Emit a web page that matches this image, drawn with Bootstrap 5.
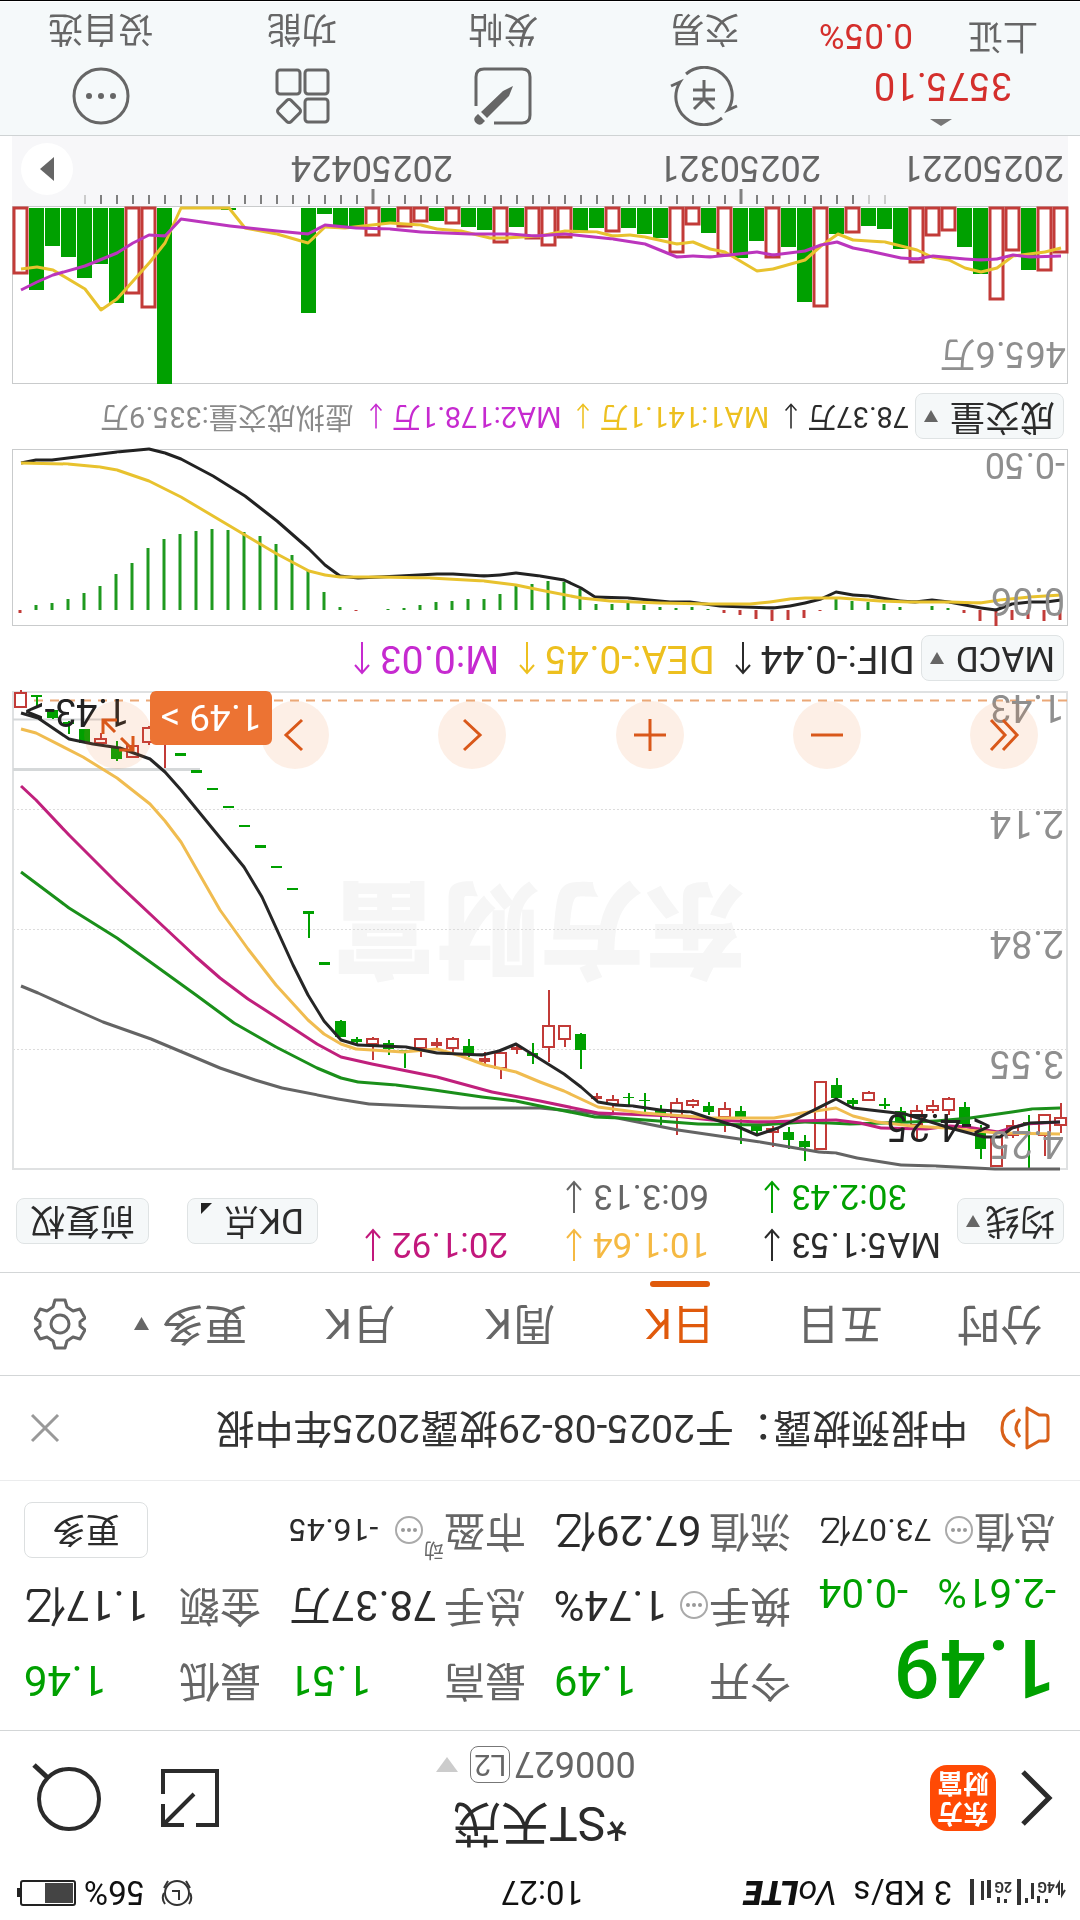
<!DOCTYPE html>
<html lang="zh-CN">
<head>
<meta charset="utf-8">
<meta name="viewport" content="width=device-width, initial-scale=1">
<title>*ST天茂 000627</title>
<link href="https://cdn.jsdelivr.net/npm/bootstrap@5.3.0/dist/css/bootstrap.min.css" rel="stylesheet">
<style>
body{font-family:Roboto,"Noto Sans CJK SC",sans-serif;color:#2b2b2b;background:#fff;line-height:1}
button{font-family:inherit;line-height:1}
a{color:inherit;text-decoration:none}
svg{display:block;flex:none}
/* the phone is held upside down */
.phone{transform:rotate(180deg);min-height:100vh;border-bottom:1px solid #000}
.line{fill:none;stroke:currentColor;stroke-width:3}
.thin{stroke-width:2}.thick{stroke-width:4}.heavy{stroke-width:5}
.status{height:54px;padding:0 16px 0 12px;font-size:33px;color:#111}
.grow{flex:1 1 0}
.volte{font-style:italic;font-size:34px}
.volte b{font-weight:900}
.sig{font-size:14px}
.head{height:136px;border-bottom:1px solid #d3d6d7;padding:0 30px}
.back{margin-left:-4px}
.logo{width:66px;height:66px;border-radius:17px;background:#ff4a05;color:#fff;font-size:26px;font-weight:700;line-height:30px}
.stock{font-size:48px;line-height:60px}
.code{font-size:36px;color:#666;padding-left:8px;margin:10px 0 2px}
.lv{font-size:29px;border:1px solid #777;border-radius:8px;padding:3px}
.plain{background:none;border:0;padding:0;color:inherit}
.acts{gap:56px}
.quote{height:250px;padding:12px 24px;display:grid;grid-template-columns:repeat(4,1fr);column-gap:28px;border-bottom:1px solid #ebeced}
.quote .col-q{display:flex;flex-direction:column}
.cell{height:75px;font-size:42px;display:flex;align-items:center;white-space:nowrap}
.cell span{color:#666;font-size:41px}
.cell b{margin-left:auto;font-weight:400}
.cell .small-v{font-size:32px}
.cell .tiny{font-size:20px;align-self:flex-start;padding-top:8px}
.down{color:#00a000}
.up{color:#d42f2c}
.price{height:106px;font-size:82px;font-weight:500;padding-top:9px}
.chg{height:44px;font-size:40px;padding-bottom:4px}
.more{width:124px;height:56px;border:1px solid #dcdfe0;border-radius:8px;background:#fff;font-size:34px;color:#2b2b2b}
.notice{height:105px;border-bottom:1px solid #d3d6d7;padding:0 30px;font-size:39px;gap:32px;color:#333}
.tabs{height:103px;border-bottom:1px solid #d3d6d7;font-size:43px;color:#666}
.tabs .tab{width:160px;height:100%;position:relative}
.tabs .active{color:#e05a0c}
.tabs .active::after{content:"";position:absolute;bottom:8px;width:60px;height:6px;border-radius:3px;background:#e05a0c}
.tabs .tab-more{display:flex;align-items:center;justify-content:center;gap:12px;padding-left:18px}
.pill{height:46px;border:1px solid #dfe3e4;border-radius:8px;background:#f5f8f9;color:#2b2b2b;font-size:35px;padding:0 8px;display:flex;align-items:center;justify-content:center;gap:12px;white-space:nowrap;flex:none}
.pill-tight{gap:5px}
.pill-wide{padding:0 13px}
.ma{height:102px;padding:0 16px;font-size:35px}
.ma .vals{flex:1;display:grid;grid-template-columns:176px 198px 201px;row-gap:13px;margin-left:18px}
.ma .vals div{display:flex;gap:10px;justify-content:flex-end;align-items:center}
.ma-btns{gap:38px}
.legend-row{height:65px;padding:0 16px;gap:6px}
.macd{font-size:39px}
.vol{font-size:29px}
.legend-row .v{display:flex;gap:9px;align-items:center;margin-right:13px;white-space:nowrap}
.legend-row.vol .v{margin-right:9px}
.c-y{color:#edc01f}.c-o{color:#f5b942}.c-m{color:#c2187c}.c-p{color:#c62ad0}.c-g{color:#00a000}.c-d{color:#666}.c-l{color:#8a8a8a}
.chart{margin:0 12px;position:relative}
svg.plot{width:100%;height:auto;overflow:visible}
.chart text{font-size:38px;fill:#8f8f8f}
.chart .scale-s{font-size:36px}
.chart .dark{fill:#222}
.chart .water{font-size:104px;font-weight:900;fill:#f6f6f6}
.tools{position:absolute;left:30px;right:72px;bottom:10px}
.tools button{width:68px;height:68px;border-radius:50%;border:0;padding:0;background:rgba(240,120,50,.12);color:#d9581a;display:flex;align-items:center;justify-content:center}
.pricetag{position:absolute;right:138px;bottom:0;width:122px;height:54px;border-radius:6px;background:#ec7333;color:#fff;font-size:37px;border:0;padding:0}
.axis{margin:0 12px;position:relative;background:#f7f7f9}
.axis text{font-size:36px;fill:#666}
.next{position:absolute;right:9px;top:11px;width:52px;height:52px;border-radius:50%;border:0;background:#fff;padding:0;display:flex;align-items:center;justify-content:center;color:#666}
.foot{height:134px;background:#f5f9fa;border-top:1px solid #cfd3d4;color:#666;font-size:35px}
.index{width:275px;padding:9px 0 0 42px}
.index .idx-mark{margin-left:86px}
.index .idx-val{font-size:38px;margin:14px 0 0 26px}
.index .idx-row{display:flex;gap:55px;margin-top:14px}
.foot a.item{flex:1;display:flex;flex-direction:column;align-items:center;gap:20px;padding-top:9px}
</style>
</head>
<body>
<svg width="0" height="0" class="position-absolute" aria-hidden="true"><defs>
<symbol id="dn" viewBox="0 0 18 34"><path class="line thin" d="M9 1v31M2 24l7 8 7-8"/></symbol>
<symbol id="upa" viewBox="0 0 18 34"><path class="line thin" d="M9 33V2M2 10l7-8 7 8"/></symbol>
<symbol id="tri" viewBox="0 0 14 12"><path fill="currentColor" d="M0 0h14L7 12z"/></symbol>
<symbol id="info" viewBox="0 0 30 30"><circle cx="15" cy="15" r="13" fill="none" stroke="#aaa" stroke-width="2"/><g fill="#999"><circle cx="9" cy="15" r="2"/><circle cx="15" cy="15" r="2"/><circle cx="21" cy="15" r="2"/></g></symbol>
</defs></svg>

<main class="phone">
<div class="status d-flex align-items-center">
  <div class="grow d-flex align-items-center gap-2">
    <svg class="me-1" width="104" height="30" viewBox="0 0 104 30" fill="#333"><path d="M3 18l3-5v12M9 13v12l3-5" stroke="#333" stroke-width="2" fill="none"/><text class="sig" x="13" y="26" font-weight="700">4G</text><path d="M20 5h3v4h-3zM28 5h3v7h-3zM34 9h3v16h-3zM40 5h3v5h-3M47 3h4v26h-4z"/><text class="sig" x="56" y="26" font-weight="700">2G</text><path d="M61 5h3v4h-3zM68 5h3v6h-3zM77 10h4v18h-4zM84 8h3v19h-3zM94 3h4v26h-4z"/></svg>
    <span class="text-nowrap me-2">3 KB/s</span><span class="volte">Vo<b>LTE</b></span>
  </div>
  <div>10:27</div>
  <div class="grow d-flex align-items-center justify-content-end gap-2">
    <svg class="me-2" width="32" height="30" viewBox="0 0 32 30" fill="none" stroke="#333" stroke-width="2"><circle cx="16" cy="15" r="12"/><path d="M14 8v9h7M4 4c-3 4-3 7-1 11M28 4c3 4 3 7 1 11M3 20l4 7M29 20l-4 7"/></svg>
    <span>56%</span>
    <svg width="60" height="28" viewBox="0 0 60 28"><rect x="1" y="2" width="54" height="24" rx="2" fill="none" stroke="#222" stroke-width="2"/><path fill="#444" d="M3 4h28v20H3z"/><path fill="#222" d="M56 10h3v9h-3z"/></svg>
  </div>
</div>

<header class="head d-flex align-items-center">
  <div class="grow d-flex align-items-center gap-4">
    <a href="#" class="back" aria-label="返回"><svg width="34" height="58" viewBox="0 0 34 58"><path class="line heavy" d="M31 3L5 29l26 26"/></svg></a>
    <a href="#" class="logo text-center d-flex flex-column justify-content-center"><span>东方</span><span>财富</span></a>
  </div>
  <div class="text-center">
    <h1 class="stock m-0 fw-normal">*ST天茂</h1>
    <div class="code d-flex align-items-center justify-content-center gap-1"><span>000627</span><span class="lv">L2</span>
    <svg class="ms-2" width="22" height="15" viewBox="0 0 22 15"><path fill="#ccc" d="M0 0h22L11 15z"/></svg></div>
  </div>
  <div class="grow acts d-flex align-items-center justify-content-end">
    <button class="plain" aria-label="全屏"><svg width="60" height="60" viewBox="0 0 60 60"><path class="line thick" d="M24 3H3v54h54V34M36 3h21v21M57 3L26 34"/></svg></button>
    <button class="plain" aria-label="搜索"><svg width="74" height="70" viewBox="0 0 74 70"><circle class="line thick" cx="35" cy="34" r="30"/><path class="line heavy" d="M56 55l14 13"/></svg></button>
  </div>
</header>

<section class="quote">
  <div class="col-q">
    <div class="price down">1.49</div>
    <div class="chg down d-flex justify-content-between align-items-center"><b class="fw-normal">-2.61%</b><b class="fw-normal">-0.04</b></div>
    <div class="cell"><span>总值</span><svg width="30" height="30"><use href="#info"/></svg><b class="small-v">73.07亿</b></div>
  </div>
  <div class="col-q">
    <div class="cell"><span>今开</span><b class="down">1.49</b></div>
    <div class="cell"><span>换手</span><svg width="30" height="30"><use href="#info"/></svg><b>1.74%</b></div>
    <div class="cell"><span>流值</span><b>67.29亿</b></div>
  </div>
  <div class="col-q">
    <div class="cell"><span>最高</span><b class="down">1.51</b></div>
    <div class="cell"><span>总手</span><b>78.37万</b></div>
    <div class="cell"><span>市盈</span><span class="tiny">动</span><svg width="30" height="30"><use href="#info"/></svg><b class="small-v">-16.45</b></div>
  </div>
  <div class="col-q">
    <div class="cell"><span>最低</span><b class="down">1.46</b></div>
    <div class="cell"><span>金额</span><b>1.17亿</b></div>
    <div class="cell justify-content-end"><button class="more">更多</button></div>
  </div>
</section>

<section class="notice d-flex align-items-center">
  <svg width="50" height="44" viewBox="0 0 50 44" color="#d9611a"><path class="line" stroke-linejoin="round" d="M2 12q0-3 3-3h6L23 2v40L11 35H5q-3 0-3-3zM30 13q8 9 0 18M35 4q13 5 13 18T35 40"/></svg>
  <a href="#" class="flex-grow-1 text-nowrap">中报预披露：于2025-08-29披露2025年中报</a>
  <button class="plain" aria-label="关闭"><svg width="30" height="30" viewBox="0 0 30 30" color="#999"><path class="line" d="M2 2l26 26M28 2L2 28"/></svg></button>
</section>

<nav class="tabs d-flex align-items-center">
  <button class="plain tab">分时</button>
  <button class="plain tab">五日</button>
  <button class="plain tab active d-flex justify-content-center align-items-center">日K</button>
  <button class="plain tab">周K</button>
  <button class="plain tab">月K</button>
  <button class="plain tab tab-more">更多<svg width="15" height="13"><use href="#tri"/></svg></button>
  <button class="plain flex-grow-1 d-flex justify-content-center" aria-label="设置"><svg width="52" height="52" viewBox="0 0 52 52"><path class="line" stroke-linejoin="round" d="M21 2h10l2 7 6 4 7-2 5 9-5 4v4l5 4-5 9-7-2-6 4-2 7H21l-2-7-6-4-7 2-5-9 5-4v-4l-5-4 5-9 7 2 6-4z"/><circle class="line" cx="26" cy="26" r="9"/></svg></button>
</nav>

<section class="ma d-flex align-items-center">
  <button class="pill pill-tight">均线<svg width="14" height="12" color="#666"><use href="#tri"/></svg></button>
  <div class="vals">
    <div>MA5:1.53<svg width="18" height="34"><use href="#dn"/></svg></div>
    <div class="c-o">10:1.64<svg width="18" height="34"><use href="#dn"/></svg></div>
    <div class="c-m">20:1.92<svg width="18" height="34"><use href="#dn"/></svg></div>
    <div class="c-g">30:2.43<svg width="18" height="34"><use href="#dn"/></svg></div>
    <div class="c-d">60:3.13<svg width="18" height="34"><use href="#dn"/></svg></div>
  </div>
  <div class="ma-btns d-flex">
    <button class="pill pill-wide"><span>DK点</span><svg class="mt-4" width="11" height="11" viewBox="0 0 12 12"><path d="M12 0v12H0z" fill="#222"/></svg></button>
    <button class="pill pill-wide">前复权</button>
  </div>
</section>

<section class="chart">
  <svg class="plot" viewBox="0 0 1056 479" id="kline">
    <text class="water" x="320" y="279">东方财富</text>
    <path d="M1 120.500h1054M1 240.500h1054M1 360.500h1054" stroke="#dcdcdc" stroke-dasharray="2 2"/>
    <rect x="1" y="1" width="1054" height="477" fill="none" stroke="#dfe1e2" stroke-width="2"/>
    <path d="M1 469.500h1054" stroke="#eba877" stroke-width="2" stroke-dasharray="9 7"/>
    <path d="M950 450.500h105" stroke="#d5d8d9" stroke-width="2"/><path d="M868 400.500h187" stroke="#d5d8d9" stroke-width="3"/>
    <g id="candles" transform="rotate(180) translate(-1068 -1170)"></g>
    <text x="4" y="39">4.25</text><text x="4" y="119">3.55</text><text x="4" y="239">2.84</text><text x="4" y="359">2.14</text><text x="4" y="475">1.43</text>
    <text class="dark" x="77" y="56">&lt;-4.25</text><text class="dark" x="939" y="471">1.43-&gt;</text>
  </svg>
  <div class="tools d-flex justify-content-between">
    <button aria-label="最早"><svg width="34" height="34" viewBox="0 0 34 34"><path class="line" d="M18 2L4 17l14 15M30 2L16 17l14 15"/></svg></button>
    <button aria-label="缩小"><svg width="34" height="34" viewBox="0 0 34 34"><path class="line" d="M1 17h32"/></svg></button>
    <button aria-label="放大"><svg width="34" height="34" viewBox="0 0 34 34"><path class="line" d="M1 17h32M17 1v32"/></svg></button>
    <button aria-label="左移"><svg width="34" height="34" viewBox="0 0 34 34"><path class="line" d="M25 2L9 17l16 15"/></svg></button>
    <button aria-label="右移"><svg width="34" height="34" viewBox="0 0 34 34"><path class="line" d="M10 2l16 15-16 15"/></svg></button>
    <button aria-label="横屏"><svg width="34" height="34" viewBox="0 0 34 34"><path class="line" d="M2 16V2h14M2 2l12 12M32 18v14H18M32 32L20 20"/></svg></button>
  </div>
  <button class="pricetag">1.49 &gt;</button>
</section>

<div class="legend-row macd d-flex align-items-center">
  <button class="pill">MACD<svg width="14" height="12" color="#666"><use href="#tri"/></svg></button>
  <span class="v">DIF:-0.44<svg width="18" height="36"><use href="#upa"/></svg></span>
  <span class="v c-y">DEA:-0.45<svg width="18" height="36"><use href="#upa"/></svg></span>
  <span class="v c-p">M:0.03<svg width="18" height="36"><use href="#upa"/></svg></span>
</div>
<section class="chart">
  <svg class="plot" viewBox="0 0 1056 177">
    <rect x=".5" y=".5" width="1055" height="176" fill="none" stroke="#c9cbcc"/>
    <g id="macd" transform="rotate(180) translate(-1068 -626)"></g>
    <text x="3" y="38">0.06</text><text class="scale-s" x="3" y="173">-0.50</text>
  </svg>
</section>

<div class="legend-row vol d-flex align-items-center">
  <button class="pill">成交量<svg width="14" height="12" color="#666"><use href="#tri"/></svg></button>
  <span class="v">78.37万<svg width="14" height="36"><use href="#dn"/></svg></span>
  <span class="v c-y">MA1:141.1万<svg width="14" height="36"><use href="#dn"/></svg></span>
  <span class="v c-p">MA2:178.1万<svg width="14" height="36"><use href="#dn"/></svg></span>
  <span class="v c-l">虚拟成交量:335.9万</span>
</div>
<section class="chart">
  <svg class="plot" viewBox="0 0 1056 178">
    <rect x=".5" y=".5" width="1055" height="177" fill="none" stroke="#c9cbcc"/>
    <g id="volume" transform="rotate(180) translate(-1068 -384)"></g>
    <text class="scale-s" x="2" y="42">465.6万</text>
  </svg>
</section>
<div class="axis">
  <svg class="plot" viewBox="0 0 1056 70">
    <g id="ticks" transform="rotate(180) translate(-1068 -206)"></g>
    <text x="4" y="50">20250221</text><text x="328" y="50" text-anchor="middle">20250321</text><text x="696" y="50" text-anchor="middle">20250424</text>
  </svg>
  <button class="next" aria-label="下一页"><svg width="14" height="24" viewBox="0 0 14 24"><path d="M0 0l14 12L0 24z" fill="currentColor"/></svg></button>
</div>

<footer class="foot d-flex">
  <a href="#" class="index d-flex flex-column">
    <svg class="idx-mark" width="22" height="7" viewBox="0 0 22 7"><path d="M0 7L11 0l11 7z" fill="#777"/></svg>
    <span class="up idx-val">3575.10</span>
    <span class="idx-row"><span>上证</span><span class="up">0.05%</span></span>
  </a>
  <a href="#" class="item"><svg width="68" height="60" viewBox="-2 0 68 60"><path class="line" d="M14 8A28 28 0 0 1 56 44l9-4M50 52A28 28 0 0 1 8 16l-9 4M22 17l10 10 10-10M21 27h22M21 36h22M32 27v19"/></svg>交易</a>
  <a href="#" class="item"><svg width="60" height="60" viewBox="0 0 60 60"><path class="line" d="M39 3H11q-8 0-8 8v38q0 8 8 8h38q8 0 8-8V20"/><path d="M20 40l4-10L46 8l6 6-22 21zM48 5l3-3q3-2 6 1t1 6l-3 3z" fill="currentColor"/></svg>发帖</a>
  <a href="#" class="item"><svg width="60" height="60" viewBox="0 0 60 60"><g class="line"><rect x="4" y="4" width="23" height="23" rx="3"/><rect x="4" y="32" width="23" height="24" rx="3"/><rect x="32" y="32" width="23" height="24" rx="3"/><rect x="34" y="6" width="18" height="18" rx="3" transform="rotate(45 43 15)"/></g></svg>功能</a>
  <a href="#" class="item"><svg width="60" height="60" viewBox="0 0 60 60"><circle class="line" cx="30" cy="30" r="27"/><g fill="currentColor"><circle cx="18" cy="30" r="3"/><circle cx="30" cy="30" r="3"/><circle cx="42" cy="30" r="3"/></g></svg>设自选</a>
</footer>
</main>

<script src="https://cdn.jsdelivr.net/npm/bootstrap@5.3.0/dist/js/bootstrap.bundle.min.js"></script>
<script>
const RED='#c23b38', GREEN='#00a000', x=i=>21+16*i;
const line=(pts,c)=>`<polyline points="${pts}" fill="none" stroke="${c}" stroke-width="3" stroke-linejoin="round"/>`;

// newest first: type (r hollow, R solid red, g green), body from/to, wick from/to
const candles=`r693,707,690,707 g695,697,695,706 g710,718,709,719 g722,724,721,734 g729,743,729,743 r739,743,733,744 g748,759,741,761 r746,757,744,757 r728,742,726,745 R738,741,738,768
g753,756,753,756 g770,773,770,773 g788,790,788,790 g806,808,806,808 g825,827,825,827 g845,848,845,848 g866,868,866,868 g888,890,888,890 g911,914,911,938 g962,965,962,965
g1021,1037,1020,1037 g1039,1042,1037,1046 r1039,1044,1037,1060 g1043,1049,1040,1055 g1050,1052,1050,1068 r1039,1048,1039,1057 R1042,1046,1038,1049 r1039,1048,1037,1053 g1046,1055,1039,1057 R1058,1062,1052,1065
r1053,1068,1053,1079 R1047,1050,1044,1054 g1053,1056,1043,1064 r1026,1047,990,1062 r1026,1039,1026,1047 g1034,1050,1033,1069 R1096,1099,1093,1102 r1100,1104,1095,1113 g1097,1098,1093,1107 g1100,1101,1093,1113
g1109,1115,1105,1125 r1103,1117,1098,1135 r1101,1105,1099,1108 g1106,1112,1102,1115 r1109,1117,1102,1132 g1111,1118,1106,1144 g1126,1131,1124,1136 r1129,1132,1126,1147 g1132,1140,1127,1149 g1141,1147,1135,1161
r1082,1149,1081,1150 g1085,1098,1078,1099 g1100,1104,1098,1107 r1093,1100,1091,1101 g1104,1106,1098,1109 g1111,1123,1107,1124 r1111,1125,1105,1139 r1106,1110,1100,1113 r1099,1110,1097,1115 g1107,1124,1102,1125
g1133,1149,1125,1159 r1137,1166,1136,1167 r1126,1135,1120,1138 g1122,1124,1115,1168 r1115,1135,1115,1156 r1118,1125,1103,1133`.split(/\s+/);
let s='';
candles.forEach((c,i)=>{const t=c[0],[a,b,w,z]=c.slice(1).split(',').map(Number),k=t=='g'?GREEN:RED;
 s+=`<path d="M${x(i)} ${w}V${z}" stroke="${k}" stroke-width="2"/>`;
 s+=t=='r'?`<rect x="${x(i)-6}" y="${a}" width="11" height="${b-a}" fill="#fff" stroke="${k}" stroke-width="2"/>`:`<rect x="${x(i)-6}" y="${a}" width="11" height="${b-a}" fill="${k}"/>`;});
s+=line('21,986 38,993 69,1007 103,1022 151,1039 182,1052 220,1068 255,1080 282,1088 338,1099 369,1104 413,1106 461,1108 540,1108 592,1113 678,1130 760,1142 819,1152 836,1153 857,1158 901,1165 936,1166 995,1169 1060,1169','#646464');
s+=line('21,872 69,908 117,938 196,995 234,1023 276,1047 317,1068 341,1078 358,1082 396,1085 434,1090 482,1097 516,1101 540,1106 595,1117 619,1118 698,1124 760,1125 805,1122 850,1124 884,1123 936,1121 970,1118 1012,1112 1032,1109 1060,1108','#1a8f1a');
s+=line('21,786 36,800 69,835 117,883 165,928 196,957 220,978 248,999 276,1017 317,1044 341,1057 372,1064 437,1077 492,1092 540,1101 598,1113 674,1116 712,1120 760,1122 798,1121 836,1120 860,1123 881,1128 926,1129 950,1126 967,1127 998,1132 1025,1124 1060,1122','#c0207c');
s+=line('21,729 36,733 83,757 117,778 150,804 165,821 181,842 220,910 248,949 276,985 308,1020 324,1034 341,1044 356,1049 403,1052 437,1049 461,1056 485,1065 516,1072 540,1082 564,1091 598,1107 643,1113 712,1118 774,1118 802,1113 836,1108 853,1116 877,1122 912,1126 946,1128 998,1133 1060,1134','#f0bc50');
s+=line('21,713 38,718 69,739 93,744 120,748 150,759 165,772 181,790 244,867 262,897 293,965 308,995 324,1021 341,1040 358,1045 406,1047 437,1053 482,1055 499,1051 516,1044 540,1059 564,1074 581,1087 598,1102 616,1105 633,1106 660,1110 691,1112 709,1118 736,1126 757,1135 778,1128 798,1118 836,1099 853,1108 905,1114 950,1128 984,1137 1000,1137 1012,1128 1030,1123 1060,1122','#262626');
document.getElementById('candles').innerHTML=s;

const hist=[613,605,603,599,593,586,574,563,548,539,534,531,529,530,532,536,544,555,571,592,607,611,610,609,608,605,602,601,599,599,594,586,584,581,582,589,604,604,603,605,607,608,607,609,613,615,619,621,620,618,611,597,601,602,604,607,610,606,608,613,621,626,620,619,621,620];
s=hist.map((y,i)=>`<path d="M${x(i)-1} 610V${y}" stroke="${y<610?'#1f991f':RED}" stroke-width="3"/>`).join('');
s+=line('21,463 36,460 52,460 68,458 117,452 149,449 165,453 181,459 213,476 245,496 277,521 309,549 325,565 340,576 358,578 400,576 437,574 453,574 484,576 500,575 516,573 540,576 564,580 581,588 595,597 628,598 670,602 690,602 720,606 745,607 773,608 790,606 805,603 821,599 836,592 853,595 869,596 900,601 915,602 932,600 949,602 965,605 981,608 996,610 1012,604 1030,602 1046,602 1061,600','#222');
s+=line('21,463 68,464 100,467 117,470 149,481 181,497 213,516 245,535 277,554 309,571 325,575 340,577 380,577 430,578 484,581 516,585 540,590 581,598 610,601 660,603 710,604 750,604 770,602 790,599 805,598 840,598 880,601 910,602 950,602 980,603 1000,600 1030,597 1061,595','#e8c22e');
document.getElementById('macd').innerHTML=s;

const vol='r274 g290 g246 g257 g278 g264 g303 r294 r308 g384 g208 g208 g208 g210 g208 g208 g208 g208 g313 g214 g226 g227 r236 g223 r227 r222 g221 r224 g227 g230 r243 g227 r239 r246 r238 g233 g228 r232 g228 g234 g238 r253 r225 g233 r256 g258 g241 r258 g247 g302 r307 g234 r233 g226 g229 g249 r263 r236 r231 g247 g274 r300 r251 g270 r271 r253'.split(' ');
s=vol.map((v,i)=>{const h=v.slice(1)-208;return v[0]=='g'?`<rect x="${x(i)-8}" y="208" width="15" height="${h}" fill="${GREEN}"/>`:`<rect x="${x(i)-7}" y="208" width="13" height="${h-1}" fill="#fff" stroke="${RED}" stroke-width="3"/>`}).join('');
s+=line('21,269 37,267 53,270 85,289 101,310 117,299 150,262 165,243 181,208 229,208 245,228 277,234 308,243 325,227 345,228 390,223 421,225 437,229 461,231 490,238 505,238 540,236 565,231 597,232 613,236 630,235 645,237 677,244 693,242 710,249 725,252 757,271 773,269 805,260 821,246 838,234 853,240 885,242 917,250 932,257 949,260 965,268 981,272 997,268 1013,256 1045,252 1061,248','#e8c22e');
s+=line('21,290 37,282 53,275 85,266 117,253 133,243 149,235 165,236 181,219 230,226 277,231 308,234 325,225 356,228 390,229 421,232 470,234 510,234 535,236 565,234 613,239 645,244 677,257 693,256 710,257 757,252 773,255 805,251 821,245 837,242 853,248 869,251 901,258 917,259 933,256 965,259 981,260 997,259 1013,255 1030,257 1061,256','#bb35bd');
document.getElementById('volume').innerHTML=s;

s='';
for(let i=4;i<=54;i++){const big=i==22||i==45;s+=`<path d="M${x(i)} ${big?189:195}V204" stroke="${i==4||i>52?'#ccc':'#808080'}" stroke-width="${big?3:2}"/>`;}
document.getElementById('ticks').innerHTML=s;
</script>
</body>
</html>
